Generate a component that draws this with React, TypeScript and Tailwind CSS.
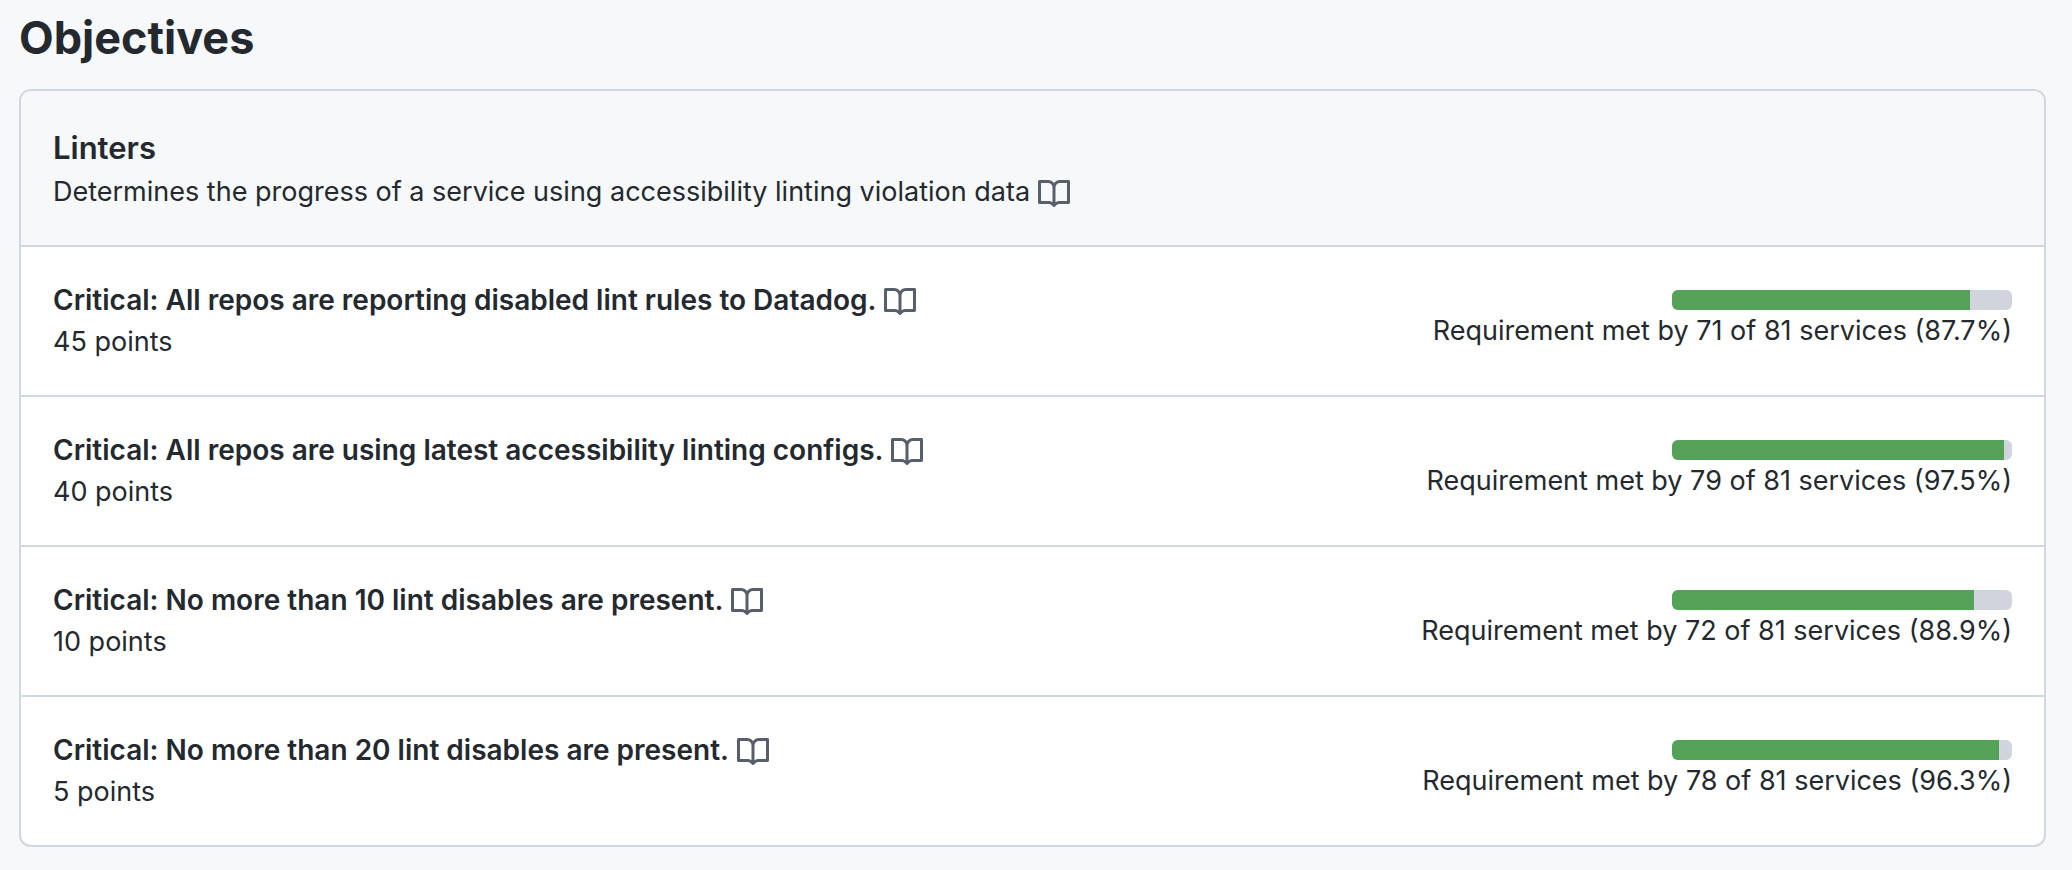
type Objective = {
  title: string;
  points: number;
  met: number;
  total: number;
};

const objectives: Objective[] = [
  { title: "All repos are reporting disabled lint rules to Datadog.", points: 45, met: 71, total: 81 },
  { title: "All repos are using latest accessibility linting configs.", points: 40, met: 79, total: 81 },
  { title: "No more than 10 lint disables are present.", points: 10, met: 72, total: 81 },
  { title: "No more than 20 lint disables are present.", points: 5, met: 78, total: 81 },
];

function DocsLink({ label }: { label: string }) {
  return (
    <a href="#docs" aria-label={label} className="shrink-0 pt-1 text-[#57606a]">
      <svg viewBox="0 0 16 16" className="size-8" fill="currentColor" aria-hidden="true">
        <path d="M0 1.75A.75.75 0 0 1 .75 1h4.253c1.227 0 2.317.59 3 1.501A3.743 3.743 0 0 1 11.006 1h4.245a.75.75 0 0 1 .75.75v10.5a.75.75 0 0 1-.75.75h-4.507a2.25 2.25 0 0 0-1.591.659l-.622.621a.75.75 0 0 1-1.06 0l-.622-.621A2.25 2.25 0 0 0 5.258 13H.75a.75.75 0 0 1-.75-.75Zm7.251 10.324.004-5.073-.002-2.253A2.25 2.25 0 0 0 5.003 2.5H1.5v9h3.757a3.75 3.75 0 0 1 1.994.574ZM8.755 4.75l-.004 7.322a3.752 3.752 0 0 1 1.992-.572H14.5v-9h-3.495a2.25 2.25 0 0 0-2.25 2.25Z" />
      </svg>
    </a>
  );
}

function ObjectiveRow({ title, points, met, total }: Objective) {
  const percent = ((met / total) * 100).toFixed(1);
  return (
    <li className="flex items-start justify-between gap-8 border-t-2 border-[#d0d7de] px-8 py-8">
      <div>
        <div className="flex items-center gap-2">
          <h3 className="text-[28px] font-semibold">Critical: {title}</h3>
          <DocsLink label={`Documentation: ${title}`} />
        </div>
        <p>{points} points</p>
      </div>
      <div className="flex flex-col items-end pt-[11px]">
        <div
          role="progressbar"
          aria-label={title}
          aria-valuenow={met}
          aria-valuemin={0}
          aria-valuemax={total}
          className="h-5 w-[340px] overflow-hidden rounded-md bg-[#d0d5dd]"
        >
          <div className="h-full bg-[#54a257]" style={{ width: `${percent}%` }} />
        </div>
        <p className="text-right">
          Requirement met by {met} of {total} services ({percent}%)
        </p>
      </div>
    </li>
  );
}

export default function App() {
  return (
    <main className="min-h-screen bg-[#f6f8fa] pr-[26px] pb-5 pl-[19px] pt-2 font-[Inter,sans-serif] text-[27px] leading-[42px] text-[#24292f]">
      <h1 className="text-[45px] leading-[60px] font-bold">Objectives</h1>
      <section className="mt-[21px] overflow-hidden rounded-xl border-2 border-[#d0d7de] bg-white">
        <header className="bg-[#f6f8fa] px-8 pt-[34px] pb-8">
          <h2 className="text-[31px] leading-[46px] font-semibold">Linters</h2>
          <div className="flex items-center gap-2">
            <p>Determines the progress of a service using accessibility linting violation data</p>
            <DocsLink label="Linters documentation" />
          </div>
        </header>
        <ul>
          {objectives.map((objective) => (
            <ObjectiveRow key={objective.title} {...objective} />
          ))}
        </ul>
      </section>
    </main>
  );
}
